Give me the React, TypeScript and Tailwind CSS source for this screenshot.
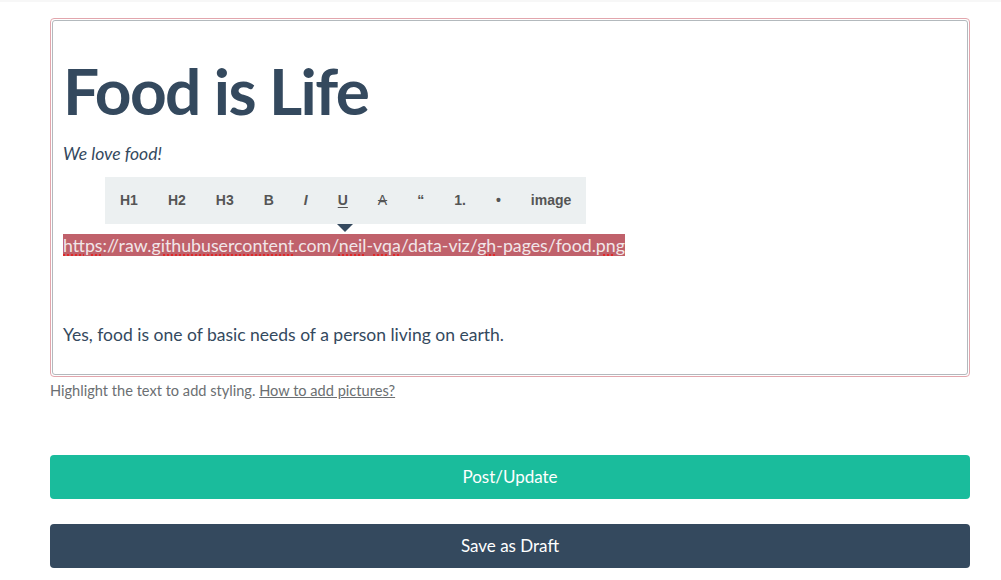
import type { ReactNode } from "react";

const TOOLS: { label: ReactNode; cls?: string }[] = [
  { label: "H1" },
  { label: "H2" },
  { label: "H3" },
  { label: "B" },
  { label: "I", cls: "italic" },
  { label: "U", cls: "underline underline-offset-2" },
  { label: "A", cls: "line-through font-normal" },
  { label: "\u201C" },
  { label: "1." },
  { label: "\u2022" },
  { label: "image" },
];

function Squiggle({ children }: { children: ReactNode }) {
  return (
    <span className="underline decoration-dotted decoration-[#e02828] decoration-2 underline-offset-[2px]">
      {children}
    </span>
  );
}

function Toolbar() {
  return (
    <div className="relative ml-[42px] inline-flex h-[47px] items-center bg-[#ecf0f1] font-['Liberation_Sans',Arial,sans-serif] text-[14px] font-bold text-[#555]">
      {TOOLS.map((t, i) => (
        <button key={i} className={"px-[15px] " + (t.cls ?? "")}>
          {t.label}
        </button>
      ))}
      {/* pointer arrow */}
      <span className="absolute left-[232px] top-[47px] h-0 w-0 border-x-[8px] border-t-[8px] border-x-transparent border-t-[#34495e]" />
    </div>
  );
}

export default function App() {
  return (
    <div className="min-h-[580px] bg-white font-['Lato','Open_Sans',sans-serif] text-[#34495e]">
      <div className="h-[2px] bg-[#f7f7f7]" />
      <div className="ml-[50px] w-[920px] pt-[16px]">
        <div className="rounded-[4px] border border-[#e2a6ad] p-px">
          <div className="h-[355px] rounded-[3px] border border-[#b3b9bd] px-[10px] pt-[35px]">
            <h1 className="text-[64px] font-bold leading-[1.1] tracking-[-1.6px]">Food is Life</h1>
            <p className="mt-[16px] text-[17.5px] italic leading-[24px]">We love food!</p>
            <div className="mt-[11px]">
              <Toolbar />
            </div>
            <p className="mt-[11px] text-[17.75px] leading-[21px]">
              <span className="bg-[#c0616b] text-[#f1e6e8]">
                <Squiggle>https</Squiggle>://raw.<Squiggle>githubusercontent</Squiggle>.com/
                <Squiggle>neil</Squiggle>-<Squiggle>vqa</Squiggle>/data-viz/<Squiggle>gh</Squiggle>
                -pages/food.<Squiggle>png</Squiggle>
              </span>
            </p>
            <p className="mt-[67px] text-[17.5px] leading-[24px]">
              Yes, food is one of basic needs of a person living on earth.
            </p>
          </div>
        </div>
        <p className="mt-[4px] text-[14.6px] leading-[20px] text-[#6b6f72]">
          Highlight the text to add styling.{" "}
          <a href="#" className="underline">
            How to add pictures?
          </a>
        </p>
        <button className="mt-[54px] flex h-[44px] w-full items-center justify-center rounded-[4px] bg-[#1abc9c] text-[17px] text-white">
          Post/Update
        </button>
        <button className="mt-[25px] flex h-[44px] w-full items-center justify-center rounded-[4px] bg-[#34495e] text-[17px] text-white">
          Save as Draft
        </button>
      </div>
    </div>
  );
}
